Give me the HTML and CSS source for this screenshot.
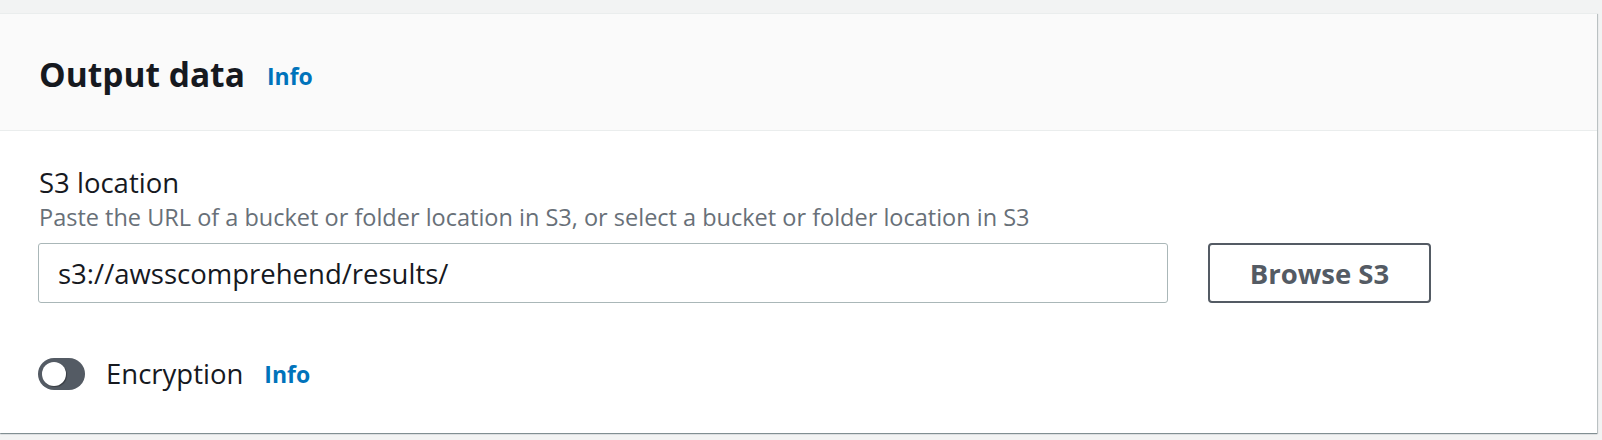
FILE: index.html
```html
<!DOCTYPE html>
<html lang="en">
<head>
<meta charset="utf-8">
<title>Output data</title>
<link rel="stylesheet" href="styles.css">
</head>
<body>
<div class="page">
  <section class="card">
    <header class="card-header">
      <h2 class="title">Output data</h2>
      <a class="info" href="#">Info</a>
    </header>
    <div class="card-body">
      <div class="field">
        <div class="label">S3 location</div>
        <div class="desc">Paste the URL of a bucket or folder location in S3, or select a bucket or folder location in S3</div>
        <div class="control-row">
          <div class="input">s3://awsscomprehend/results/</div>
          <button class="btn" type="button">Browse S3</button>
        </div>
      </div>
      <div class="toggle-row">
        <span class="toggle"><span class="knob"></span></span>
        <span class="toggle-label">Encryption</span>
        <a class="info" href="#">Info</a>
      </div>
    </div>
  </section>
</div>
</body>
</html>
```
FILE: styles.css
```css
* { box-sizing: border-box; }
html, body { margin: 0; padding: 0; }
body {
  background: #f2f3f3;
  font-family: "Open Sans", "Noto Sans", sans-serif;
  color: #16191f;
}
.page {
  padding: 13px 5px 0 0;
  height: 440px;
}
.card {
  background: #fff;
  border-top: 1px solid #eaeded;
  box-shadow: 0 1px 1px 0 rgba(0, 28, 36, 0.35), 1px 1px 1px 0 rgba(0, 28, 36, 0.18);
}
.card-header {
  height: 117px;
  background: #fafafa;
  border-bottom: 1px solid #eaeded;
  display: flex;
  align-items: center;
  padding-left: 39px;
  padding-top: 4px;
}
.title {
  margin: 0;
  font-size: 33.5px;
  font-weight: 700;
  line-height: 42px;
  color: #16191f;
}
.info {
  color: #0073bb;
  font-weight: 700;
  font-size: 23px;
  text-decoration: none;
  margin-left: 21px;
}
.card-header .info {
  margin-left: 22px;
  margin-top: 4px;
}
.card-body {
  padding: 33px 39px 40px 38px;
}
.label {
  font-size: 27.5px;
  line-height: 38px;
  padding-left: 1px;
}
.desc {
  font-size: 23.5px;
  line-height: 30px;
  color: #687078;
  padding-left: 1px;
}
.control-row {
  display: flex;
  gap: 40px;
  margin-top: 11px;
}
.input {
  width: 1130px;
  height: 60px;
  border: 1px solid #aab7b8;
  border-radius: 3px;
  padding: 0 19px;
  display: flex;
  align-items: center;
  font-size: 27.5px;
  color: #16191f;
}
.btn {
  width: 223px;
  height: 60px;
  border: 2px solid #545b64;
  border-radius: 4px;
  background: #fff;
  color: #545b64;
  font-family: "Open Sans", "Noto Sans", sans-serif;
  font-weight: 700;
  font-size: 27.5px;
  padding: 0;
}
.toggle-row {
  display: flex;
  align-items: center;
  margin-top: 52px;
  height: 38px;
}
.toggle {
  width: 47px;
  height: 32px;
  border-radius: 16px;
  background: #545b64;
  display: flex;
  align-items: center;
  padding-left: 4px;
}
.knob {
  width: 24px;
  height: 24px;
  border-radius: 50%;
  background: #fff;
  box-shadow: 1px 1px 1px rgba(0, 0, 0, 0.35);
}
.toggle-label {
  font-size: 27.5px;
  line-height: 38px;
  margin-left: 21px;
}
```
